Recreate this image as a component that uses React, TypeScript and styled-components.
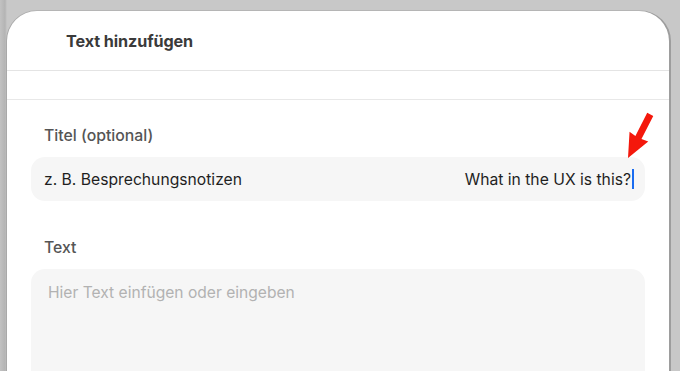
import styled, { createGlobalStyle } from 'styled-components'

const Global = createGlobalStyle`
  html, body {
    margin: 0;
    padding: 0;
    background: #c8c8c8;
    overflow: hidden;
  }
  body {
    font-family: Inter, "Liberation Sans", Arial, sans-serif;
    -webkit-font-smoothing: antialiased;
  }
`

const Stage = styled.div`
  width: 680px;
  height: 371px;
  padding: 11px 11px 0 7px;
  box-sizing: border-box;
  background: linear-gradient(90deg, #c2c2c2 0, #b4b4b4 5px, #c8c8c8 7px);
`

const Sheet = styled.div`
  position: relative;
  height: 100%;
  background: #fff;
  border-radius: 30px 30px 0 0;
  box-shadow: -1px 0 0 #a9a9a9, 2px 0 0 #9d9d9d, 0 -1px 0 #b5b5b5;
  overflow: hidden;
`

const Header = styled.header`
  display: flex;
  align-items: center;
  height: 59px;
  padding-left: 59px;
  border-bottom: 1px solid #e4e4e4;
`

const Title = styled.h1`
  margin: 0;
  font-size: 16.2px;
  font-weight: 700;
  color: #3a3a3a;
  letter-spacing: -0.1px;
`

const Spacer = styled.div`
  height: 28px;
  border-bottom: 1px solid #e8e8e8;
`

const Body = styled.div`
  display: flex;
  flex-direction: column;
  padding: 27px 24px 0 24px;
`

const Label = styled.label`
  display: block;
  padding-left: 13px;
  margin-bottom: 12px;
  font-size: 15.8px;
  font-weight: 500;
  line-height: 18px;
  color: #555;
`

const Field = styled.div`
  display: flex;
  align-items: center;
  justify-content: space-between;
  height: 44px;
  padding: 0 11px 0 13px;
  background: #f6f6f6;
  border-radius: 14px;
  font-size: 15.7px;
  color: #1f1f1f;
  margin-bottom: 38px;
`

const Typed = styled.span`
  display: flex;
  align-items: center;
`

const Caret = styled.span`
  display: inline-block;
  width: 2px;
  height: 20px;
  margin-left: 1px;
  background: #1a6cf0;
`

const Area = styled.div`
  height: 120px;
  padding: 14px 17px;
  background: #f6f6f6;
  border-radius: 14px;
  font-size: 15.6px;
  color: #b2b2b2;
`

const Arrow = styled.svg`
  position: absolute;
  left: 600px;
  top: 95px;
  width: 60px;
  height: 70px;
`

export default function App() {
  return (
    <>
      <Global />
      <Stage>
        <Sheet>
          <Header>
            <Title>Text hinzufügen</Title>
          </Header>
          <Spacer />
          <Body>
            <Label>Titel (optional)</Label>
            <Field>
              <span>z. B. Besprechungsnotizen</span>
              <Typed>
                What in the UX is this?
                <Caret />
              </Typed>
            </Field>
            <Label>Text</Label>
            <Area>Hier Text einfügen oder eingeben</Area>
          </Body>
          <Arrow viewBox="0 0 60 70">
            <g transform="translate(21 52) rotate(27)">
              <polygon
                points="-3.4,-49 3.4,-49 3.4,-23 10.5,-24 0,0 -10.5,-24 -3.4,-23"
                fill="#f4180c"
              />
            </g>
          </Arrow>
        </Sheet>
      </Stage>
    </>
  )
}
